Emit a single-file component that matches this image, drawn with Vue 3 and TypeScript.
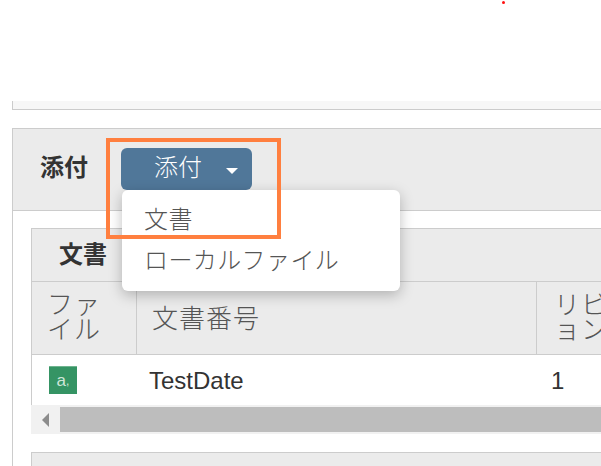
<template>
  <div class="page">
    <div class="top-area">
      <span class="red-dot"></span>
    </div>
    <div class="prev-panel"></div>

    <section class="panel">
      <header class="panel-head">
        <span class="panel-title">添付</span>
        <div class="attach">
          <button class="attach-btn">
            <span>添付</span>
            <i class="caret"></i>
          </button>
          <ul class="menu">
            <li v-for="item in menuItems" :key="item">{{ item }}</li>
          </ul>
        </div>
      </header>

      <div class="panel-body">
        <div class="doc-box">
          <div class="doc-head">文書</div>
          <div class="doc-table">
            <div class="cell th col-file">ファイル</div>
            <div class="cell th col-no"><span class="no-label">文書番号</span></div>
            <div class="cell th col-rev">リビジョン</div>
            <div class="cell td col-file">
              <span class="file-icon">a<small>,</small></span>
            </div>
            <div class="cell td col-no">{{ row.number }}</div>
            <div class="cell td col-rev">{{ row.revision }}</div>
          </div>
          <div class="scrollbar">
            <div class="scroll-arrow"><i></i></div>
            <div class="scroll-thumb"></div>
          </div>
        </div>
        <div class="next-box"></div>
      </div>
    </section>

    <div class="highlight"></div>
  </div>
</template>

<script setup lang="ts">
const menuItems: string[] = ['文書', 'ローカルファイル']
const row = { number: 'TestDate', revision: '1' }
</script>

<style>
html,
body {
  margin: 0;
  background: #fff;
  overflow: hidden;
}
</style>

<style scoped>
.page {
  position: relative;
  width: 601px;
  height: 466px;
  overflow: hidden;
  background: #fff;
  color: #333;
  font-family: "Liberation Sans", "Noto Sans CJK JP", sans-serif;
  font-size: 24px;
}

.top-area {
  position: relative;
  height: 101px;
}

.red-dot {
  position: absolute;
  left: 502px;
  top: 1px;
  width: 3px;
  height: 3px;
  background: #f11;
  border-radius: 50%;
}

.prev-panel {
  width: 720px;
  height: 8px;
  margin-left: 12px;
  background: #f7f7f7;
  border-left: 1px solid #ccc;
  border-bottom: 1px solid #ccc;
}

.panel {
  width: 720px;
  margin: 18px 0 0 12px;
  border: 1px solid #ccc;
  border-right: 0;
}

.panel-head {
  display: flex;
  align-items: flex-start;
  height: 82px;
  padding: 19px 0 0 27px;
  box-sizing: border-box;
  background: #ebebeb;
  border-bottom: 1px solid #ccc;
}

.panel-title {
  width: 81px;
  margin-top: 5px;
  font-size: 24px;
  font-weight: 700;
  line-height: 30px;
}

.attach {
  position: relative;
}

.attach-btn {
  display: flex;
  align-items: center;
  width: 131px;
  height: 42px;
  padding: 0 0 3px 33px;
  box-sizing: border-box;
  border: 0;
  border-radius: 6px;
  background: #507799;
  color: #fff;
  font: inherit;
  font-weight: 300;
  line-height: 1;
}

.caret {
  width: 0;
  height: 0;
  margin-left: 24px;
  margin-top: 6px;
  border-left: 6px solid transparent;
  border-right: 6px solid transparent;
  border-top: 6px solid #fff;
}

.menu {
  position: absolute;
  left: 1px;
  top: 42px;
  z-index: 2;
  width: 278px;
  height: 101px;
  margin: 0;
  padding: 9px 0 0;
  box-sizing: border-box;
  list-style: none;
  background: #fff;
  border-radius: 6px;
  box-shadow: 0 4px 14px rgba(0, 0, 0, 0.25);
  color: #555;
  font-weight: 300;
}

.menu li {
  height: 41px;
  padding-left: 22px;
  line-height: 41px;
  letter-spacing: 0.4px;
}

.panel-body {
  padding: 17px 0 0 18px;
}

.doc-box {
  border-left: 1px solid #ccc;
}

.doc-head {
  height: 54px;
  padding-left: 27px;
  box-sizing: border-box;
  background: #ebebeb;
  border-top: 1px solid #ccc;
  border-bottom: 1px solid #ccc;
  font-size: 24px;
  font-weight: 700;
  line-height: 52px;
}

.doc-table {
  display: grid;
  grid-template-columns: 105px 400px 1fr;
  grid-template-rows: 73px 50px;
}

.cell {
  box-sizing: border-box;
}

.th {
  background: #ebebeb;
  border-bottom: 1px solid #ccc;
  border-right: 1px solid #ccc;
  font-size: 26px;
  font-weight: 300;
  line-height: 25px;
  letter-spacing: 1px;
  color: #555;
  padding: 11px 20px 0 15px;
}

.th.col-no {
  padding-top: 25px;
  padding-left: 15px;
}

.th.col-rev {
  padding: 11px 0 0 17px;
  width: 100px;
  border-right: 0;
}

.td {
  display: flex;
  align-items: center;
  background: #fff;
}

.td.col-file {
  padding-left: 17px;
}

.td.col-no {
  padding: 2px 0 0 12px;
}

.td.col-rev {
  padding: 2px 0 0 14px;
}

.file-icon {
  display: flex;
  align-items: center;
  justify-content: center;
  width: 28px;
  height: 28px;
  background: #359464;
  border-top: 1px solid #6fb48f;
  box-sizing: border-box;
  color: #cfe6d8;
  font-size: 17px;
  font-weight: 400;
}

.file-icon small {
  font-size: 12px;
}

.scrollbar {
  display: flex;
  align-items: center;
  height: 29px;
  margin-left: -1px;
  background: #f1f1f1;
}

.scroll-arrow {
  display: flex;
  align-items: center;
  justify-content: center;
  width: 29px;
}

.scroll-arrow i {
  width: 0;
  height: 0;
  border-top: 7px solid transparent;
  border-bottom: 7px solid transparent;
  border-right: 7px solid #8c8c8c;
}

.scroll-thumb {
  flex: 1;
  height: 25px;
  background: #bdbdbd;
}

.next-box {
  height: 40px;
  margin-top: 18px;
  margin-left: 0;
  background: #ebebeb;
  border: 1px solid #ccc;
  border-right: 0;
}

.highlight {
  position: absolute;
  left: 106px;
  top: 138px;
  z-index: 3;
  width: 175px;
  height: 101px;
  box-sizing: border-box;
  border: 4px solid #ff7f3f;
  pointer-events: none;
}
</style>
